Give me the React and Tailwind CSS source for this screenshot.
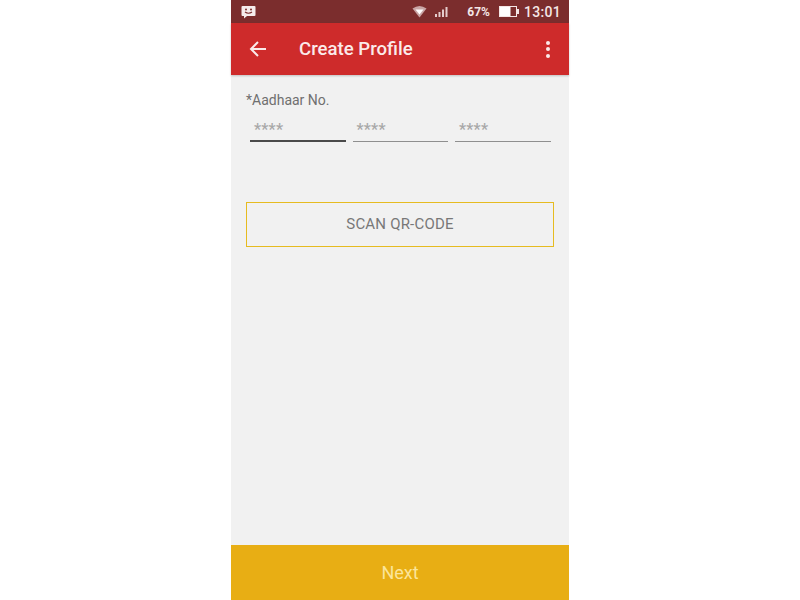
import React from 'react';

const font = { fontFamily: 'Roboto, "Noto Sans", sans-serif' };

const AadhaarField = ({ active }) => (
  <div className={`w-[95.500px] h-[30px] pl-[4px] pt-[8px] text-[16px] leading-[20px] tracking-[0.2px] font-medium text-[#a8a8a8] border-b ${active ? 'border-b-2 border-[#4a4a4a]' : 'border-[#8f8f8f]'}`}>
    ****
  </div>
);

export default function App() {
  return (
    <div className="w-[800px] h-[600px] bg-white flex justify-center overflow-hidden" style={font}>
      <div className="w-[338px] h-[600px] flex flex-col bg-[#f1f1f1]">
        {/* status bar */}
        <div className="h-[23px] bg-[#7b2d2d] flex items-center pl-[10px] pr-[8px] text-[#f4e6e6]">
          <svg width="15" height="14" viewBox="0 0 15 14">
            <path d="M1.5 1h12a1 1 0 0 1 1 1v8a1 1 0 0 1-1 1H6l-3 2.5V11H1.5a1 1 0 0 1-1-1V2a1 1 0 0 1 1-1z" fill="#f6ecec" />
            <circle cx="5" cy="4.5" r="1" fill="#7b2d2d" />
            <circle cx="10" cy="4.5" r="1" fill="#7b2d2d" />
            <path d="M4 7q3.500 2.500 7 0" stroke="#7b2d2d" strokeWidth="1.200" fill="none" />
          </svg>
          <div className="ml-auto flex items-center">
            <svg width="15" height="13" viewBox="0 0 15 13">
              <path d="M0.500 3.500Q7.500 -1.500 14.500 3.500L7.500 12.500Z" fill="#c9a5a5" />
              <path d="M3.500 4.500h8L7.500 9.500z" fill="#ffffff" />
            </svg>
            <svg className="ml-[8px]" width="13" height="10" viewBox="0 0 13 10">
              <rect x="0" y="7" width="2" height="3" fill="#e4cccc" />
              <rect x="3.500" y="5" width="2" height="5" fill="#e4cccc" />
              <rect x="7" y="2.500" width="2" height="7.500" fill="#e4cccc" />
              <rect x="10.500" y="0" width="2" height="10" fill="#e4cccc" />
            </svg>
            <span className="ml-[19px] text-[12px] font-bold leading-none">67%</span>
            <svg className="ml-[9px]" width="21" height="11" viewBox="0 0 21 11">
              <rect x="0.500" y="0.500" width="17" height="10" fill="none" stroke="#f4e6e6" />
              <rect x="1" y="1" width="10.500" height="9" fill="#ffffff" />
              <rect x="18" y="3" width="2" height="5" fill="#f4e6e6" />
            </svg>
            <span className="ml-[4px] text-[14px] font-medium leading-none tracking-[0.3px]">13:01</span>
          </div>
        </div>

        {/* toolbar */}
        <div className="h-[52px] bg-[#ce2b2b] flex items-center pl-[18px] pr-[19px] text-[#fbeaea] shadow-[0_1px_2px_rgba(0,0,0,0.2)]">
          <svg width="18" height="18" viewBox="0 0 18 18" fill="none" stroke="#fbeaea" strokeWidth="2">
            <path d="M17 9H2M9 2L2 9l7 7" />
          </svg>
          <span className="ml-[32px] text-[18.600px] font-medium leading-none">Create Profile</span>
          <div className="ml-auto flex flex-col gap-[2.500px]">
            <span className="w-[4px] h-[4px] rounded-full bg-[#fbeaea]" />
            <span className="w-[4px] h-[4px] rounded-full bg-[#fbeaea]" />
            <span className="w-[4px] h-[4px] rounded-full bg-[#fbeaea]" />
          </div>
        </div>

        {/* form */}
        <div className="flex-1 px-[15px] pt-[15px]">
          <div className="text-[14px] leading-[20px] text-[#6f6f6f]">*Aadhaar No.</div>
          <div className="flex gap-[7px] ml-[4px] mt-[2px]">
            <AadhaarField active />
            <AadhaarField />
            <AadhaarField />
          </div>
          <button className="mt-[60px] w-[308px] h-[45px] border border-[#e6bb20] text-[15px] tracking-[0.2px] text-[#787878]">
            SCAN QR-CODE
          </button>
        </div>

        {/* next button */}
        <button className="h-[55px] bg-[#e8ae14] text-[18px] text-[#fbe59a]">Next</button>
      </div>
    </div>
  );
}
